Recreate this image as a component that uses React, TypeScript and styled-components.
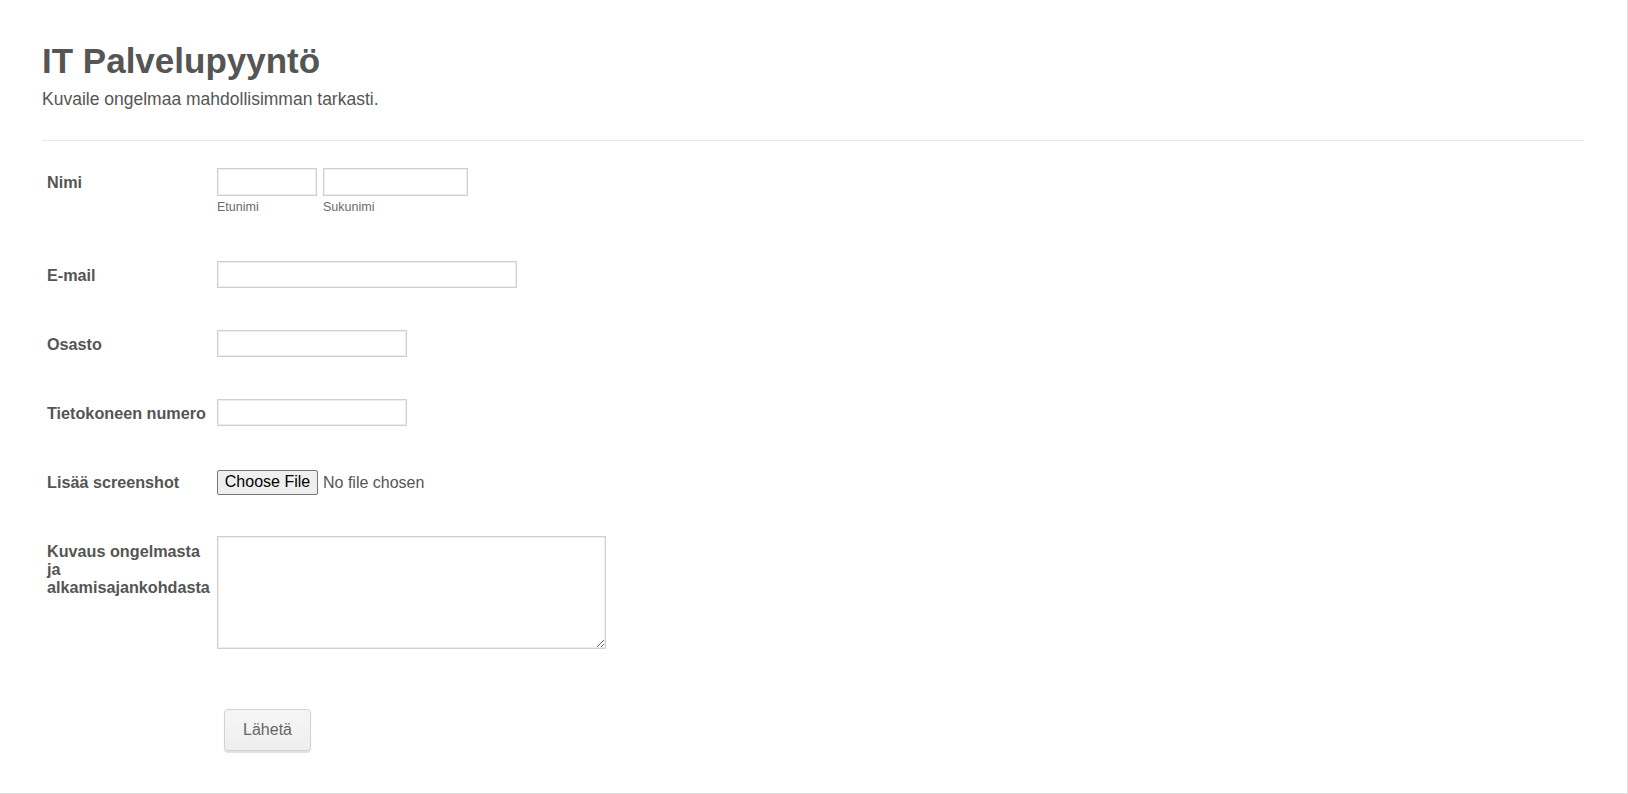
import React from 'react';
import styled, { createGlobalStyle } from 'styled-components';

const GlobalStyle = createGlobalStyle`
  html, body {
    margin: 0;
    padding: 0;
    background: #ffffff;
  }
  body {
    font-family: 'Liberation Sans', Arial, sans-serif;
    color: #555555;
  }
`;

const Page = styled.div`
  box-sizing: border-box;
  width: 100%;
  min-height: 794px;
  padding: 41px 43px 0 42px;
  border-right: 1px solid #dcdcdc;
  border-bottom: 1px solid #dcdcdc;
`;

const Header = styled.div`
  padding-bottom: 31px;
  border-bottom: 1px solid #e6e6e6;
`;

const Title = styled.h1`
  margin: 0;
  font-size: 35px;
  font-weight: bold;
  line-height: 39.6px;
  color: #555555;
`;

const SubTitle = styled.div`
  margin-top: 8px;
  font-size: 17.5px;
  line-height: 20px;
  color: #555555;
`;

const FormList = styled.form`
  padding-top: 6px;
`;

const Row = styled.div<{ $extraTop?: number }>`
  display: flex;
  align-items: flex-start;
  padding: ${(p) => 21 + (p.$extraTop || 0)}px 0 21px;
`;

const Label = styled.label`
  box-sizing: border-box;
  flex: 0 0 175px;
  min-width: 0;
  padding: 5px 4px 0 5px;
  font-size: 16.2px;
  font-weight: bold;
  line-height: 18.4px;
  color: #555555;
`;

const Field = styled.div`
  display: flex;
  gap: 6px;
`;

const SubField = styled.div`
  display: flex;
  flex-direction: column;
`;

const TextInput = styled.input<{ $w: number; $h?: number }>`
  box-sizing: border-box;
  width: ${(p) => p.$w}px;
  height: ${(p) => p.$h || 27}px;
  margin: 0;
  padding: 3px 5px;
  border: 1px solid #d0d0d0;
  box-shadow: inset 0 0 0 1px #eeeeee;
  border-radius: 0;
  background: #ffffff;
  font-family: 'Liberation Sans', Arial, sans-serif;
  font-size: 14px;
  color: #555555;
  outline: none;
`;

const SubLabel = styled.span`
  margin: 4px 0 4px;
  font-size: 12.5px;
  line-height: 15px;
  color: #6a6a6a;
`;

const FileInput = styled.input`
  height: 25px;
  margin: 2px 0 0;
  font-family: 'Liberation Sans', Arial, sans-serif;
  font-size: 16px;
  color: #555555;

  &::file-selector-button {
    box-sizing: border-box;
    height: 25px;
    width: 101px;
    margin-right: 5px;
    padding: 0 6px;
    border: 1px solid #767676;
    border-radius: 2px;
    background: #efefef;
    font-family: 'Liberation Sans', Arial, sans-serif;
    font-size: 16px;
    color: #000000;
  }
`;

const TextArea = styled.textarea`
  box-sizing: border-box;
  width: 389px;
  height: 113px;
  margin: -1px 0 0;
  padding: 4px;
  border: 1px solid #d0d0d0;
  box-shadow: inset 0 0 0 1px #eeeeee;
  border-radius: 0;
  font-family: 'Liberation Sans', Arial, sans-serif;
  font-size: 14px;
  color: #555555;
  outline: none;
  display: block;
`;

const SubmitButton = styled.button`
  box-sizing: border-box;
  margin-left: 7px;
  width: 87px;
  height: 42px;
  border: 1px solid #d2d2d2;
  border-radius: 4px;
  background: linear-gradient(#f6f6f6, #eeeeee);
  box-shadow: 0 2px 1px rgba(0, 0, 0, 0.12);
  font-family: 'Liberation Sans', Arial, sans-serif;
  font-size: 16px;
  color: #666666;
  cursor: pointer;
`;

const Spacer = styled.div`
  flex: 0 0 175px;
`;

const rows = [
  { label: 'E-mail', width: 300 },
  { label: 'Osasto', width: 190 },
  { label: 'Tietokoneen numero', width: 190 },
];

export default function App() {
  return (
    <>
      <GlobalStyle />
      <Page>
        <Header>
          <Title>IT Palvelupyyntö</Title>
          <SubTitle>Kuvaile ongelmaa mahdollisimman tarkasti.</SubTitle>
        </Header>
        <FormList onSubmit={(e) => e.preventDefault()}>
          <Row>
            <Label>Nimi</Label>
            <Field>
              <SubField>
                <TextInput type="text" $w={100} $h={28} />
                <SubLabel>Etunimi</SubLabel>
              </SubField>
              <SubField>
                <TextInput type="text" $w={145} $h={28} />
                <SubLabel>Sukunimi</SubLabel>
              </SubField>
            </Field>
          </Row>
          {rows.map((r) => (
            <Row key={r.label}>
              <Label>{r.label}</Label>
              <TextInput type="text" $w={r.width} />
            </Row>
          ))}
          <Row>
            <Label>Lisää screenshot</Label>
            <FileInput type="file" />
          </Row>
          <Row>
            <Label>Kuvaus ongelmasta ja alkamisajankohdasta</Label>
            <TextArea />
          </Row>
          <Row $extraTop={18}>
            <Spacer />
            <SubmitButton type="submit">Lähetä</SubmitButton>
          </Row>
        </FormList>
      </Page>
    </>
  );
}
